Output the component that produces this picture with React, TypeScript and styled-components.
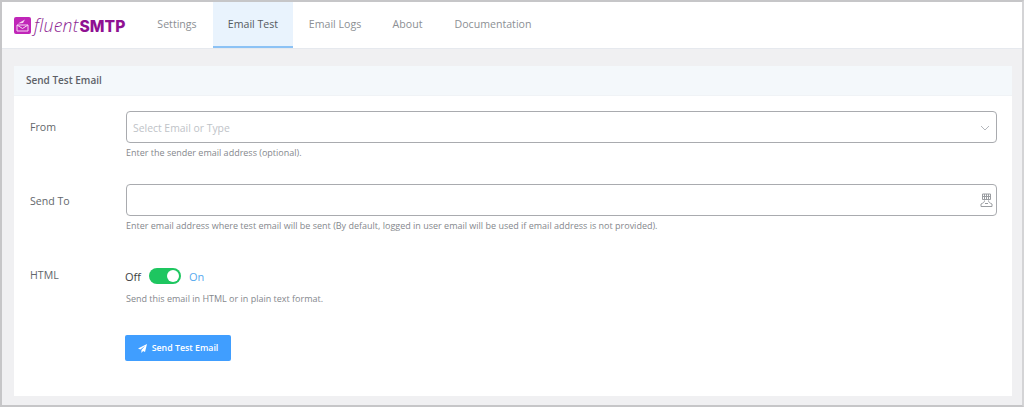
import React from "react";
import styled, { createGlobalStyle } from "styled-components";

const Global = createGlobalStyle`
  html, body { margin: 0; padding: 0; background: #f1f1f3; }
  body { font-family: "Open Sans", "Noto Sans", sans-serif; }
`;

const Frame = styled.div`
  width: 1024px;
  height: 407px;
  box-sizing: border-box;
  border: 2px solid #c6c6c8;
  border-right-color: #d4d4d6;
  background: #f0f0f2;
  display: flex;
  flex-direction: column;
  overflow: hidden;
`;

const Header = styled.header`
  height: 46px;
  flex: none;
  background: #fff;
  border-bottom: 1px solid #e6e9ee;
  display: flex;
  align-items: stretch;
  padding-left: 12px;
`;

const Logo = styled.div`
  width: 127px;
  display: flex;
  align-items: center;
  gap: 3px;
  flex: none;
`;

const LogoLight = styled.span`
  font-family: "Open Sans", sans-serif;
  font-style: italic;
  font-weight: 300;
  font-size: 17.6px;
  letter-spacing: 0.25px;
  color: #8d1f92;
`;

const LogoBold = styled.span`
  font-family: "Inter", sans-serif;
  font-weight: 800;
  font-size: 15.6px;
  color: #8f1192;
  margin-left: 1px;
`;

const Tab = styled.div<{ $width: number; $active?: boolean }>`
  width: ${(p) => p.$width}px;
  display: flex;
  align-items: center;
  justify-content: center;
  font-size: 10.6px;
  color: ${(p) => (p.$active ? "#555a60" : "#8c8f94")};
  background: ${(p) => (p.$active ? "#e9f3fd" : "transparent")};
  box-shadow: ${(p) => (p.$active ? "inset 0 -2px 0 #8cc2f5" : "none")};
  padding-bottom: 2px;
`;

const Card = styled.section`
  margin: 17px 10px 9px 12px;
  flex: 1;
  background: #fff;
  display: flex;
  flex-direction: column;
`;

const CardHead = styled.div`
  height: 30px;
  flex: none;
  background: #f4f8fb;
  border-bottom: 1px solid #f0f3f6;
  display: flex;
  align-items: center;
  padding: 0 0 1px 12px;
  box-sizing: border-box;
  font-size: 10px;
  font-weight: 600;
  color: #5d6167;
`;

const Form = styled.div`
  padding: 15px 15px 0 16px;
  display: flex;
  flex-direction: column;
`;

const Row = styled.div<{ $height: number }>`
  display: grid;
  grid-template-columns: 96px 1fr;
  height: ${(p) => p.$height}px;
`;

const Label = styled.div<{ $top: number }>`
  font-size: 10.6px;
  color: #63676c;
  padding-top: ${(p) => p.$top}px;
`;

const Field = styled.div`
  height: 32px;
  box-sizing: border-box;
  border: 1px solid #a9abaf;
  border-radius: 4px;
  display: flex;
  align-items: center;
  justify-content: space-between;
  padding: 1px 3px 0 6px;
  font-size: 10.4px;
  color: #c0c3c8;
  background: #fff;
`;

const ChevronSlot = styled.span`
  display: flex;
  padding-right: 3px;
`;

const Help = styled.div<{ $top?: number }>`
  font-size: 9px;
  color: #85888d;
  margin-top: ${(p) => p.$top ?? 3}px;
  line-height: 13px;
`;

const SwitchRow = styled.div`
  display: flex;
  align-items: center;
  height: 18px;
  margin: 1px 0 0 -1px;
  gap: 8px;
  font-size: 11px;
`;

const Off = styled.span`
  color: #3c3f43;
  font-weight: 500;
`;

const On = styled.span`
  color: #58a9ee;
  font-weight: 500;
`;

const Track = styled.span`
  width: 32px;
  height: 16px;
  border-radius: 8px;
  background: #1ec660;
  display: flex;
  align-items: center;
  justify-content: flex-end;
  padding-right: 2px;
  box-sizing: border-box;
`;

const Knob = styled.span`
  width: 12px;
  height: 12px;
  border-radius: 50%;
  background: #fff;
`;

const SendButton = styled.button`
  width: 106px;
  height: 26px;
  margin: 30px 0 0 -1px;
  border: 0;
  border-radius: 2px;
  background: #409eff;
  color: #fff;
  font-family: inherit;
  font-size: 8.8px;
  font-weight: 600;
  display: flex;
  align-items: center;
  justify-content: center;
  gap: 5px;
  padding: 0;
`;

const Chevron = () => (
  <svg width="10" height="6" viewBox="0 0 10 6" fill="none" stroke="#b4b7bc" strokeWidth="1">
    <path d="M1 1l4 4 4-4" />
  </svg>
);

const SmtpIcon = () => (
  <svg width="13" height="15" viewBox="0 0 13 15" fill="none" stroke="#9a9da1" strokeWidth="1">
    <path d="M2.500 1h8v5.500h-8zM4.500 1v5.500M6.500 1v5.500M8.500 1v5.500M2.500 3.500h8" />
    <path d="M4.500 7.500C4.500 9.500 3 10 1 11v2.500h11V11c-2-1-3.500-1.500-3.500-3.500M5 10.500h3" />
  </svg>
);

const PlaneIcon = () => (
  <svg width="9" height="9" viewBox="0 0 10 10" fill="#fff">
    <path d="M10 0L0 5l2.600 1.200L8 2 3.800 6.800V10l1.800-2.200L7.800 9z" />
  </svg>
);

const LogoMark = () => (
  <svg width="17" height="17" viewBox="0 0 17 17">
    <rect width="17" height="17" rx="2" fill="#c026b8" />
    <path d="M3 8h11v6H3z" fill="none" stroke="#f6d7f3" strokeWidth="1" />
    <path d="M3 8l5.500 3.500L14 8" fill="none" stroke="#f6d7f3" strokeWidth="1" />
    <path d="M4 6.500L11 2.500 9 6z" fill="#f6d7f3" />
  </svg>
);

const tabs = [
  { text: "Settings", width: 72 },
  { text: "Email Test", width: 80, active: true },
  { text: "Email Logs", width: 84 },
  { text: "About", width: 61 },
  { text: "Documentation", width: 110 },
];

export default function App() {
  return (
    <>
      <Global />
      <Frame>
        <Header>
          <Logo>
            <LogoMark />
            <span>
              <LogoLight>fluent</LogoLight>
              <LogoBold>SMTP</LogoBold>
            </span>
          </Logo>
          {tabs.map((t) => (
            <Tab key={t.text} $width={t.width} $active={t.active}>
              {t.text}
            </Tab>
          ))}
        </Header>
        <Card>
          <CardHead>Send Test Email</CardHead>
          <Form>
            <Row $height={73}>
              <Label $top={9}>From</Label>
              <div>
                <Field>
                  Select Email or Type
                  <ChevronSlot>
                    <Chevron />
                  </ChevronSlot>
                </Field>
                <Help>Enter the sender email address (optional).</Help>
              </div>
            </Row>
            <Row $height={82}>
              <Label $top={10}>Send To</Label>
              <div>
                <Field>
                  <span />
                  <SmtpIcon />
                </Field>
                <Help>
                  Enter email address where test email will be sent (By default, logged in user email will be used if email address is not provided).
                </Help>
              </div>
            </Row>
            <Row $height={100}>
              <Label $top={2}>HTML</Label>
              <div>
                <SwitchRow>
                  <Off>Off</Off>
                  <Track>
                    <Knob />
                  </Track>
                  <On>On</On>
                </SwitchRow>
                <Help $top={7}>Send this email in HTML or in plain text format.</Help>
                <SendButton>
                  <PlaneIcon />
                  Send Test Email
                </SendButton>
              </div>
            </Row>
          </Form>
        </Card>
      </Frame>
    </>
  );
}
